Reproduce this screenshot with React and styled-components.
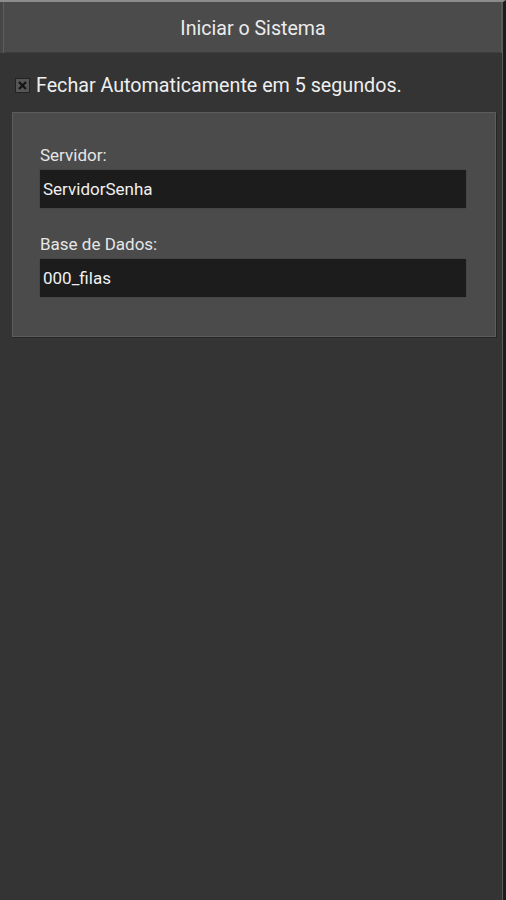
import React from 'react';
import styled, { createGlobalStyle } from 'styled-components';

const GlobalStyle = createGlobalStyle`
  html, body {
    margin: 0;
    padding: 0;
    background: #343434;
  }
  body {
    font-family: Roboto, "Liberation Sans", sans-serif;
  }
`;

const Screen = styled.div`
  width: 506px;
  min-height: 900px;
  box-sizing: border-box;
  background: #343434;
  border-top: 2px solid #8c8c8c;
  border-right: 3px solid #1c1c1c;
  box-shadow: inset -1px 0 0 #5a5a5a;
  display: flex;
  flex-direction: column;
`;

const Header = styled.header`
  height: 51px;
  box-sizing: border-box;
  padding-top: 2px;
  display: flex;
  align-items: center;
  justify-content: center;
  background: #4b4b4b;
  border-left: 3px solid #474747;
  box-shadow: inset 1px 0 0 #5e5e5e, inset -2px 0 0 #5a5a5a, inset 0 -1px 0 #3e3e3e;
  color: #ececec;
  font-size: 19.6px;
`;

const Body = styled.main`
  display: flex;
  flex-direction: column;
  padding: 23px 7px 0 12px;
`;

const CheckRow = styled.label`
  display: flex;
  align-items: center;
  gap: 6px;
  margin-left: 3px;
  color: #efefef;
  font-size: 19.7px;
  height: 18px;
`;

const Box = styled.span`
  width: 15px;
  height: 15px;
  box-sizing: border-box;
  background: #565656;
  border: 1px solid #232323;
  display: flex;
  align-items: center;
  justify-content: center;
`;

const Panel = styled.section`
  margin-top: 18px;
  padding: 32px 29px 39px 27px;
  background: #4b4b4b;
  border: 1px solid #5c5c5c;
  box-shadow: 1px 1px 0 #262626;
  display: flex;
  flex-direction: column;
`;

const Label = styled.div`
  color: #e6e6e6;
  font-size: 17px;
  line-height: 20px;
  margin-bottom: 5px;
  margin-top: ${p => (p.first ? '0' : '26px')};
`;

const Field = styled.div`
  height: 38px;
  background: #1c1c1c;
  box-shadow: 0 0 1px #2a2a2a;
  color: #f0f0f0;
  font-size: 17px;
  display: flex;
  align-items: center;
  padding-left: 3px;
`;

const fields = [
  { label: 'Servidor:', value: 'ServidorSenha' },
  { label: 'Base de Dados:', value: '000_filas' },
];

export default function App() {
  return (
    <>
      <GlobalStyle />
      <Screen>
        <Header>Iniciar o Sistema</Header>
        <Body>
          <CheckRow>
            <Box>
              <svg width="11" height="11" viewBox="0 0 11 11">
                <path d="M2 2 L9 9 M9 2 L2 9" stroke="#141414" strokeWidth="2.2" />
              </svg>
            </Box>
            Fechar Automaticamente em 5 segundos.
          </CheckRow>
          <Panel>
            {fields.map((f, i) => (
              <React.Fragment key={f.label}>
                <Label first={i === 0}>{f.label}</Label>
                <Field>{f.value}</Field>
              </React.Fragment>
            ))}
          </Panel>
        </Body>
      </Screen>
    </>
  );
}
